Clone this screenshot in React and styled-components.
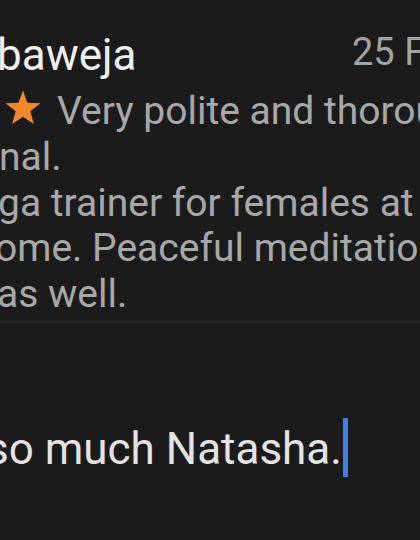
import React from "react";
import styled, { createGlobalStyle } from "styled-components";

const GlobalStyle = createGlobalStyle`
  html, body {
    margin: 0;
    padding: 0;
    background: #1b1b1b;
  }
  body {
    font-family: Roboto, "Noto Sans", "Liberation Sans", sans-serif;
  }
`;

const Screen = styled.div`
  width: 420px;
  height: 540px;
  overflow: hidden;
  background: #1b1b1b;
  display: flex;
  flex-direction: column;
`;

const ReviewCard = styled.div`
  padding: 29px 0 3px;
  border-bottom: 2px solid #272727;
`;

const HeaderRow = styled.div`
  display: flex;
  align-items: flex-start;
`;

const Name = styled.div`
  flex: 1;
  font-size: 44px;
  line-height: 52px;
  color: #efefef;
  margin-left: -3px;
  white-space: nowrap;
`;

const DateText = styled.div`
  flex: 0 0 68px;
  overflow: hidden;
  white-space: nowrap;
  font-size: 38px;
  line-height: 46px;
  color: #a3a3a3;
`;

const Body = styled.div`
  margin-top: 8px;
  font-size: 39px;
  line-height: 45.75px;
  color: #a8a8a8;
`;

const Line = styled.div`
  display: flex;
  align-items: flex-start;
  white-space: nowrap;
  margin-left: ${(p) => p.$offset || 0}px;
`;

const Star = styled.svg`
  flex: 0 0 40px;
  width: 40px;
  height: 40px;
  margin: -1px 14px 0 3px;
`;

const Composer = styled.div`
  padding-top: 97px;
  display: flex;
  align-items: flex-start;
  white-space: nowrap;
`;

const Draft = styled.span`
  font-size: 44px;
  line-height: 59px;
  color: #e4e4e4;
  margin-left: -14px;
`;

const Cursor = styled.span`
  width: 5px;
  height: 59px;
  margin: -2px 0 0 1px;
  background: #3f80e6;
`;

const StarIcon = () => (
  <Star viewBox="0 0 24 24">
    <polygon
      points="12,1.5 14.7,8.8 22.5,9.1 16.4,14 18.5,21.6 12,17.2 5.5,21.6 7.6,14 1.5,9.1 9.3,8.8"
      fill="#f0892a"
    />
  </Star>
);

export default function App() {
  return (
    <Screen>
      <GlobalStyle />
      <ReviewCard>
        <HeaderRow>
          <Name>baweja</Name>
          <DateText>25 Feb</DateText>
        </HeaderRow>
        <Body>
          <Line>
            <StarIcon />
            <span>Very polite and thorough</span>
          </Line>
          <Line $offset={-1}>nal.</Line>
          <Line $offset={-2}>ga trainer for females at</Line>
          <Line $offset={-5}>ome. Peaceful meditation</Line>
          <Line $offset={-3}>as well.</Line>
        </Body>
      </ReviewCard>
      <Composer>
        <Draft>so much Natasha.</Draft>
        <Cursor />
      </Composer>
    </Screen>
  );
}
